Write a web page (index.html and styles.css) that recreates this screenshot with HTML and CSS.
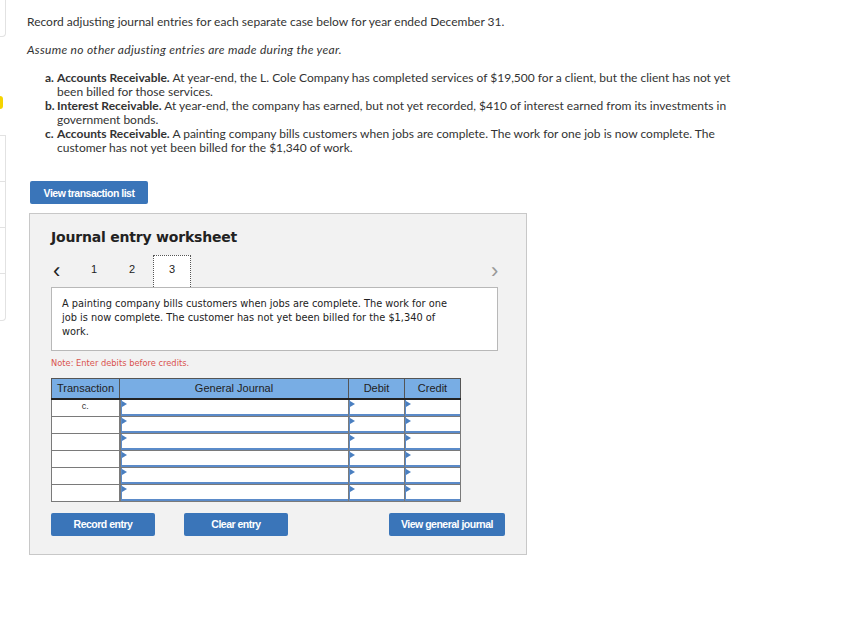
FILE: index.html
```html
<!DOCTYPE html>
<html lang="en">
<head>
  <meta charset="UTF-8" />
  <title>Journal entry worksheet</title>
  <link rel="stylesheet" href="styles.css">
</head>
<body>
  <div class="pagina">
    <!-- trilho lateral cortado -->
    <div class="trilho">
      <div class="trilho-topo"></div>
      <div class="trilho-ponto"></div>
      <div class="trilho-lista">
        <div></div><div></div><div></div><div></div>
      </div>
    </div>

    <div class="conteudo">
      <p class="enunciado">Record adjusting journal entries for each separate case below for year ended December 31.</p>
      <p class="aviso"><em>Assume no other adjusting entries are made during the year.</em></p>

      <ol class="casos">
        <li><span class="letra">a.</span><div class="caso-texto"><b>Accounts Receivable.</b> At year-end, the L. Cole Company has completed services of $19,500 for a client, but the client has not yet been billed for those services.</div></li>
        <li><span class="letra">b.</span><div class="caso-texto"><b>Interest Receivable.</b> At year-end, the company has earned, but not yet recorded, $410 of interest earned from its investments in government bonds.</div></li>
        <li><span class="letra">c.</span><div class="caso-texto"><b>Accounts Receivable.</b> A painting company bills customers when jobs are complete. The work for one job is now complete. The customer has not yet been billed for the $1,340 of work.</div></li>
      </ol>

      <button class="btn btn-lista">View transaction list</button>

      <div class="worksheet">
        <h2>Journal entry worksheet</h2>

        <div class="abas">
          <span class="seta">&lsaquo;</span>
          <span class="aba">1</span>
          <span class="aba">2</span>
          <span class="aba ativa">3</span>
          <span class="seta seta-dir">&rsaquo;</span>
        </div>

        <div class="descricao">A painting company bills customers when jobs are complete. The work for one job is now complete. The customer has not yet been billed for the $1,340 of work.</div>

        <p class="nota">Note: Enter debits before credits.</p>

        <table class="diario">
          <thead>
            <tr>
              <th class="col-trans">Transaction</th>
              <th class="col-geral">General Journal</th>
              <th class="col-valor">Debit</th>
              <th class="col-valor">Credit</th>
            </tr>
          </thead>
          <tbody>
            <tr><td class="trans">c.</td><td><div class="campo"></div></td><td><div class="campo"></div></td><td><div class="campo"></div></td></tr>
            <tr><td class="trans"></td><td><div class="campo"></div></td><td><div class="campo"></div></td><td><div class="campo"></div></td></tr>
            <tr><td class="trans"></td><td><div class="campo"></div></td><td><div class="campo"></div></td><td><div class="campo"></div></td></tr>
            <tr><td class="trans"></td><td><div class="campo"></div></td><td><div class="campo"></div></td><td><div class="campo"></div></td></tr>
            <tr><td class="trans"></td><td><div class="campo"></div></td><td><div class="campo"></div></td><td><div class="campo"></div></td></tr>
            <tr><td class="trans"></td><td><div class="campo"></div></td><td><div class="campo"></div></td><td><div class="campo"></div></td></tr>
          </tbody>
        </table>

        <div class="acoes">
          <button class="btn btn-gravar">Record entry</button>
          <button class="btn btn-limpar">Clear entry</button>
          <button class="btn btn-ver">View general journal</button>
        </div>
      </div>
    </div>
  </div>
</body>
</html>
```

FILE: styles.css
```css
* {
  box-sizing: border-box;
}
body {
  margin: 0;
  background: #ffffff;
  font-family: 'Lato', 'Open Sans', sans-serif;
  color: #333333;
}
p {
  margin: 0;
}

.pagina {
  display: flex;
  align-items: flex-start;
}

/* Trilho lateral */
.trilho {
  width: 6px;
  flex-shrink: 0;
}
.trilho-topo {
  height: 37px;
  border-right: 1px solid #e2e2e2;
  border-bottom: 1px solid #e2e2e2;
  border-bottom-right-radius: 4px;
}
.trilho-ponto {
  width: 3px;
  height: 13px;
  margin-top: 59px;
  background: #f5d400;
  border-radius: 0 6px 6px 0;
}
.trilho-lista {
  margin-top: 26px;
  border-right: 1px solid #e2e2e2;
  border-top: 1px solid #e2e2e2;
  border-bottom: 1px solid #e2e2e2;
  border-bottom-right-radius: 4px;
}
.trilho-lista div {
  height: 46px;
  border-bottom: 1px solid #e2e2e2;
}
.trilho-lista div:last-child {
  border-bottom: none;
}

/* Conteudo */
.conteudo {
  padding: 15px 0 0 21px;
  width: 760px;
}
.enunciado {
  font-size: 12px;
  line-height: 14px;
}
.aviso {
  margin-top: 14px;
  font-size: 12px;
  line-height: 14px;
  letter-spacing: 0.3px;
}

.casos {
  list-style: none;
  margin: 14px 0 0;
  padding: 0 0 0 18px;
}
.casos li {
  display: flex;
  font-size: 12px;
  line-height: 14px;
}
.casos .letra {
  width: 12px;
  flex-shrink: 0;
  font-weight: bold;
}
.caso-texto {
  width: 685px;
}
.casos b {
  font-weight: bold;
}

.btn {
  border: none;
  border-radius: 2px;
  background: #3a75b9;
  color: #ffffff;
  font-family: 'Liberation Sans', Arial, sans-serif;
  font-weight: bold;
  font-size: 10.5px;
  letter-spacing: -0.5px;
  height: 23px;
  padding: 0;
  cursor: pointer;
}
.btn-lista {
  margin: 26px 0 0 3px;
  width: 118px;
}

/* Worksheet */
.worksheet {
  margin: 9px 0 0 2px;
  width: 498px;
  background: #f2f2f2;
  border: 1px solid #c8c8c8;
  padding: 14px 21px 18px 21px;
  font-family: 'DejaVu Sans', Verdana, sans-serif;
}
.worksheet h2 {
  margin: 0;
  font-size: 14px;
  font-weight: bold;
  color: #222222;
  letter-spacing: -0.2px;
  line-height: 18px;
}

.abas {
  display: flex;
  align-items: flex-end;
  margin-top: 9px;
  height: 32px;
  font-family: 'Liberation Sans', Arial, sans-serif;
  font-size: 11px;
  color: #222222;
}
.abas .seta {
  font-size: 22px;
  line-height: 26px;
  width: 24px;
  padding-left: 2px;
  align-self: center;
}
.abas .aba {
  width: 38px;
  text-align: center;
  line-height: 24px;
  height: 30px;
}
.abas .ativa {
  background: #ffffff;
  border: 1px dotted #555555;
  border-bottom: none;
  margin-left: 2px;
  height: 32px;
  line-height: 26px;
}
.abas .seta-dir {
  margin-left: auto;
  color: #999999;
  width: 16px;
}

.descricao {
  background: #ffffff;
  border: 1px solid #b8b8b8;
  padding: 9px 40px 10px 10px;
  font-size: 9.8px;
  line-height: 14px;
  color: #222222;
  height: 64px;
  width: 447px;
}

.nota {
  margin-top: 6px;
  font-size: 8.3px;
  color: #d9534f;
  line-height: 12px;
}

.diario {
  margin-top: 9px;
  border-collapse: collapse;
  font-family: 'Liberation Sans', Arial, sans-serif;
  font-size: 11px;
  table-layout: fixed;
}
.diario th {
  background: #78ade4;
  border: 1px solid #555555;
  border-bottom: 2px solid #222222;
  height: 20px;
  font-weight: normal;
  color: #222222;
  padding: 0;
}
.col-trans { width: 68px; }
.col-geral { width: 229px; }
.col-valor { width: 56px; }
.diario td {
  border: 1px solid #7a7a7a;
  height: 17px;
  padding: 0;
  background: #ffffff;
}
.diario td.trans {
  text-align: center;
  vertical-align: top;
  font-size: 9px;
  line-height: 12px;
  border-right: 2px solid #7a7a7a;
}
.campo {
  position: relative;
  height: 16px;
  border-left: 1px solid #5b8bc9;
  border-bottom: 2px solid #5b8bc9;
  background: #ffffff;
}
.campo::before {
  content: '';
  position: absolute;
  top: 1px;
  left: 0;
  border-top: 3px solid transparent;
  border-bottom: 3px solid transparent;
  border-left: 5px solid #4a7fc0;
}

.acoes {
  display: flex;
  margin-top: 11px;
}
.btn-gravar {
  width: 104px;
}
.btn-limpar {
  width: 104px;
  margin-left: 29px;
}
.btn-ver {
  width: 116px;
  margin-left: auto;
}
```
